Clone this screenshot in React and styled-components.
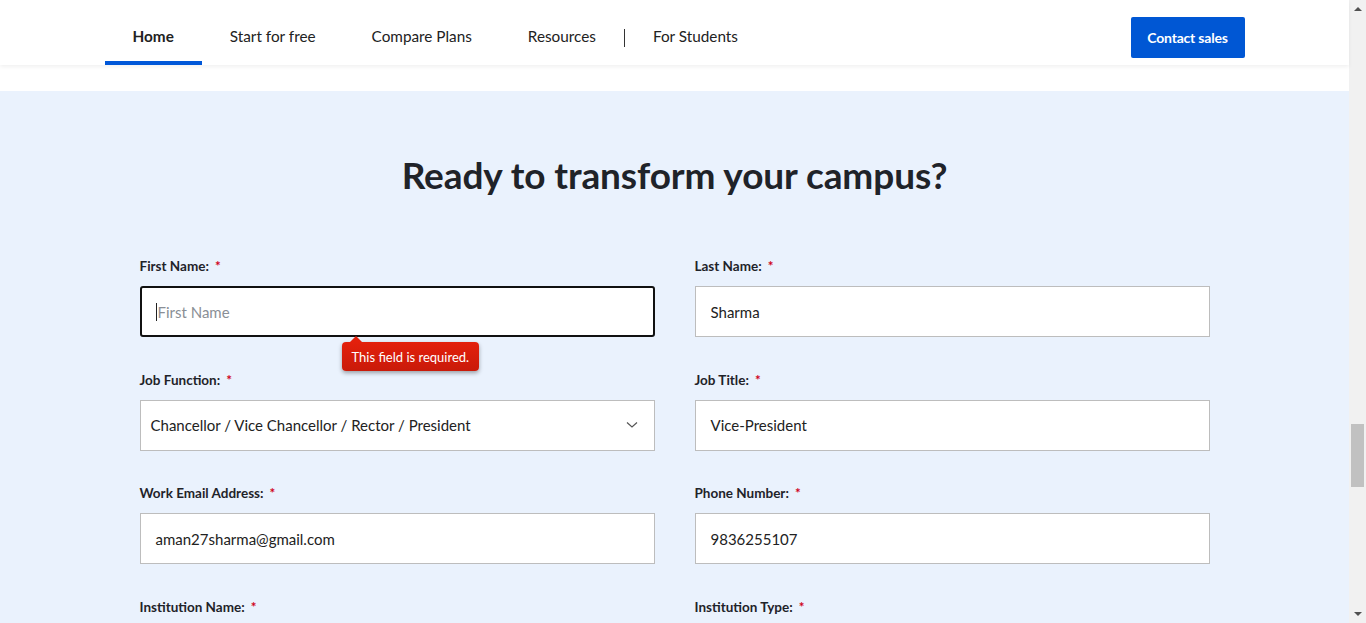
import React from "react";
import styled, { createGlobalStyle } from "styled-components";

const Global = createGlobalStyle`
  html, body { margin: 0; padding: 0; height: 100%; overflow: hidden; }
  body { font-family: Lato, "Open Sans", sans-serif; color: #1f2329; }
  * { box-sizing: border-box; }
`;

const Shell = styled.div`
  display: flex;
  width: 1366px;
  height: 623px;
  overflow: hidden;
`;

const Page = styled.div`
  flex: 1;
  display: flex;
  flex-direction: column;
  background: #fff;
  min-height: 0;
`;

const Header = styled.header`
  flex-shrink: 0;
  height: 65px;
  background: #fff;
  box-shadow: 0 2px 4px rgba(0,0,0,0.06);
  position: relative;
  z-index: 1;
`;

const HeaderInner = styled.div`
  width: 1140px;
  height: 100%;
  margin: 0 auto;
  display: flex;
  align-items: center;
  justify-content: space-between;
`;

const Nav = styled.nav`
  display: flex;
  height: 100%;
  align-items: stretch;
`;

const NavItem = styled.a`
  display: flex;
  align-items: center;
  padding: 10px 28px 0;
  font-size: 15.3px;
  color: #222;
  font-weight: ${p => (p.$active ? 700 : 400)};
  border-bottom: 4px solid ${p => (p.$active ? "#0057d8" : "transparent")};
  cursor: pointer;
`;

const Divider = styled.span`
  align-self: center;
  width: 1px;
  height: 18px;
  background: #333;
  margin-top: 10px;
`;

const SalesButton = styled.button`
  width: 114px;
  height: 41px;
  margin-top: 10px;
  border: none;
  border-radius: 2px;
  background: #0057d4;
  color: #fff;
  font-family: inherit;
  font-weight: 700;
  font-size: 14px;
  letter-spacing: -0.2px;
`;

const Spacer = styled.div`
  flex-shrink: 0;
  height: 26px;
  background: #fff;
`;

const Section = styled.section`
  flex: 1 0 auto;
  background: #eaf2fd;
  padding-top: 62px;
`;

const Title = styled.h2`
  margin: 0;
  text-align: center;
  font-size: 37px;
  font-weight: 700;
  color: #1f2329;
  letter-spacing: -0.1px;
  line-height: 44px;
`;

const Form = styled.form`
  width: 1070px;
  margin: 60px auto 0;
  display: grid;
  grid-template-columns: 515px 515px;
  column-gap: 40px;
  row-gap: 33.5px;
`;

const Field = styled.div`
  display: flex;
  flex-direction: column;
  gap: 11px;
  position: relative;
`;

const Label = styled.label`
  font-size: 13.5px;
  font-weight: 700;
  line-height: 18px;
  color: #1f2329;
`;

const Req = styled.span`
  color: #d0021b;
  margin-left: 6px;
`;

const Input = styled.div`
  height: 51px;
  background: #fff;
  border: ${p => (p.$focus ? "2px solid #111" : "1px solid #bdbdbd")};
  border-radius: ${p => (p.$focus ? "3px" : "0")};
  display: flex;
  align-items: center;
  padding-left: ${p => (p.$focus ? "14px" : "15px")};
  padding-right: 16px;
  font-size: 15px;
  color: ${p => (p.$placeholder ? "#8a8f96" : "#222")};
  justify-content: space-between;
`;

const Caret = styled.span`
  width: 1px;
  height: 18px;
  background: #222;
  margin-right: 1px;
`;

const Placeholder = styled.span`
  display: flex;
  align-items: center;
`;

const Select = styled(Input)`
  padding-left: 10px;
`;

const Tooltip = styled.div`
  position: absolute;
  left: 202px;
  top: 85px;
  background: linear-gradient(#e3200c, #c91a09);
  color: #fff;
  font-size: 13px;
  padding: 0 10px;
  height: 29px;
  display: flex;
  align-items: center;
  border-radius: 4px;
  box-shadow: 0 2px 4px rgba(0,0,0,0.35);
  white-space: nowrap;
  z-index: 2;
  &::before {
    content: "";
    position: absolute;
    left: 8px;
    top: -6px;
    border-left: 6px solid transparent;
    border-right: 6px solid transparent;
    border-bottom: 6px solid #e3200c;
  }
`;

const ScrollBar = styled.div`
  width: 17px;
  background: #f1f1f1;
  display: flex;
  flex-direction: column;
  align-items: center;
  justify-content: space-between;
  padding: 5px 0;
  position: relative;
`;

const Arrow = styled.span`
  width: 0;
  height: 0;
  border-left: 4px solid transparent;
  border-right: 4px solid transparent;
  ${p => (p.$down ? "border-top: 4px solid #505050;" : "border-bottom: 4px solid #505050;")}
  margin: 2px 0;
`;

const Thumb = styled.div`
  position: absolute;
  left: 2px;
  top: 424px;
  width: 13px;
  height: 63px;
  background: #c1c1c1;
`;

const Chevron = () => (
  <svg width="12" height="8" viewBox="0 0 12 8" fill="none">
    <path d="M1 1.5 L6 6 L11 1.5" stroke="#555" strokeWidth="1.2" />
  </svg>
);

const fields = [
  { label: "First Name:", value: "First Name", focus: true, error: true },
  { label: "Last Name:", value: "Sharma" },
  { label: "Job Function:", value: "Chancellor / Vice Chancellor / Rector / President", select: true },
  { label: "Job Title:", value: "Vice-President" },
  { label: "Work Email Address:", value: "aman27sharma@gmail.com" },
  { label: "Phone Number:", value: "9836255107" },
  { label: "Institution Name:", value: "" },
  { label: "Institution Type:", value: "" },
];

export default function App() {
  return (
    <>
      <Global />
      <Shell>
        <Page>
          <Header>
            <HeaderInner>
              <Nav>
                <NavItem $active>Home</NavItem>
                <NavItem>Start for free</NavItem>
                <NavItem>Compare Plans</NavItem>
                <NavItem>Resources</NavItem>
                <Divider />
                <NavItem>For Students</NavItem>
              </Nav>
              <SalesButton>Contact sales</SalesButton>
            </HeaderInner>
          </Header>
          <Spacer />
          <Section>
            <Title>Ready to transform your campus?</Title>
            <Form>
              {fields.map(f => (
                <Field key={f.label}>
                  <Label>
                    {f.label}
                    <Req>*</Req>
                  </Label>
                  {f.select ? (
                    <Select>
                      {f.value}
                      <Chevron />
                    </Select>
                  ) : f.focus ? (
                    <Input $focus $placeholder>
                      <Placeholder>
                        <Caret />
                        {f.value}
                      </Placeholder>
                    </Input>
                  ) : (
                    <Input>{f.value}</Input>
                  )}
                  {f.error && <Tooltip>This field is required.</Tooltip>}
                </Field>
              ))}
            </Form>
          </Section>
        </Page>
        <ScrollBar>
          <Arrow />
          <Thumb />
          <Arrow $down />
        </ScrollBar>
      </Shell>
    </>
  );
}
